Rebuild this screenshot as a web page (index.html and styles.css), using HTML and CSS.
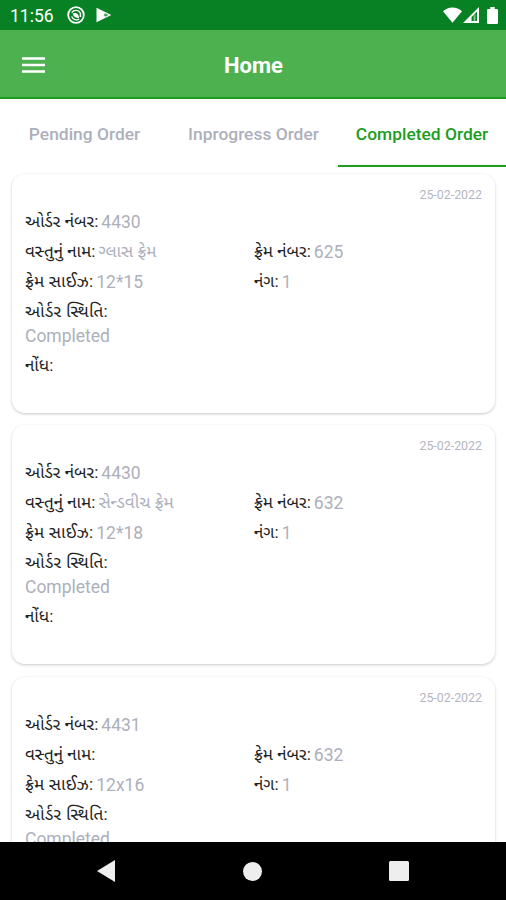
FILE: index.html
```html
<!DOCTYPE html>
<html lang="gu">
	<head>
		<meta charset="utf-8">
		<title>Home</title>
		<link rel="stylesheet" href="styles.css">
	</head>
	<body>
		<div class="status-bar">
			<span class="clock">11:56</span>
			<svg class="status-app" width="18" height="18" viewBox="0 0 18 18">
				<circle cx="9" cy="9" r="7.8" fill="none" stroke="#fff" stroke-width="1.8"/>
				<path d="M4.6 6.6C7 3.6 11.5 3.6 13.4 7V11M4.6 10.5C6 13.6 9.6 14.7 12.2 13.2" fill="none" stroke="#fff" stroke-width="1.4"/>
				<path d="M5.6 7.6C8.6 6 12 7.7 12.2 12.2C8.8 12.2 6.3 10.8 5.6 7.6Z" fill="#fff"/>
			</svg>
			<svg class="status-play" width="16" height="16" viewBox="0 0 16 16">
				<path d="M.5 .8L15.3 8L.5 15.2Z" fill="#fff"/>
				<path d="M9.3 6.3L7.5 8L9.3 9.8L12.6 8Z" fill="#4ba55e"/>
			</svg>
			<svg class="status-wifi" width="19" height="16" viewBox="0 0 19 16">
				<path d="M0 4.2C5-.9 14-.9 19 4.2L9.5 15.7Z" fill="#fff"/>
			</svg>
			<svg class="status-signal" width="16" height="16" viewBox="0 0 16 16">
				<path d="M0 16L16 0V16Z" fill="#fff"/>
				<path d="M8.5 10L14 4.5V14H8.5Z" fill="#078123"/>
				<path d="M10.5 14V8.5L12.5 6.5V14Z" fill="#80be8c"/>
			</svg>
			<svg class="status-battery" width="11" height="17" viewBox="0 0 11 17">
				<path d="M3.3 0H7.7V2H9.7Q11 2 11 3.3V15.7Q11 17 9.7 17H1.3Q0 17 0 15.7V3.3Q0 2 1.3 2H3.3Z" fill="#fff"/>
			</svg>
		</div>

		<div class="toolbar">
			<svg class="menu-icon" width="23" height="16" viewBox="0 0 23 16">
				<path d="M0 1.5H23M0 8H23M0 14.5H23" stroke="#fff" stroke-width="2.7"/>
			</svg>
			<h1>Home</h1>
		</div>

		<div class="tabs">
			<div class="tab">Pending Order</div>
			<div class="tab">Inprogress Order</div>
			<div class="tab active">Completed Order</div>
		</div>

		<div class="orders">
			<div class="card">
				<div class="date">25-02-2022</div>
				<div class="row"><div class="field"><label>ઓર્ડર નંબર:</label><span>4430</span></div></div>
				<div class="row">
					<div class="field"><label>વસ્તુનું નામ:</label><span class="name">ગ્લાસ ફ્રેમ</span></div>
					<div class="field"><label>ફ્રેમ નંબર:</label><span>625</span></div>
				</div>
				<div class="row">
					<div class="field"><label class="size">ફ્રેમ સાઈઝ:</label><span>12*15</span></div>
					<div class="field"><label>નંગ:</label><span>1</span></div>
				</div>
				<div class="row status"><label>ઓર્ડર સ્થિતિ:</label></div>
				<div class="row status-value"><span>Completed</span></div>
				<div class="row"><label>નોંધ:</label></div>
			</div>

			<div class="card">
				<div class="date">25-02-2022</div>
				<div class="row"><div class="field"><label>ઓર્ડર નંબર:</label><span>4430</span></div></div>
				<div class="row">
					<div class="field"><label>વસ્તુનું નામ:</label><span class="name">સેન્ડવીચ ફ્રેમ</span></div>
					<div class="field"><label>ફ્રેમ નંબર:</label><span>632</span></div>
				</div>
				<div class="row">
					<div class="field"><label class="size">ફ્રેમ સાઈઝ:</label><span>12*18</span></div>
					<div class="field"><label>નંગ:</label><span>1</span></div>
				</div>
				<div class="row status"><label>ઓર્ડર સ્થિતિ:</label></div>
				<div class="row status-value"><span>Completed</span></div>
				<div class="row"><label>નોંધ:</label></div>
			</div>

			<div class="card">
				<div class="date">25-02-2022</div>
				<div class="row"><div class="field"><label>ઓર્ડર નંબર:</label><span>4431</span></div></div>
				<div class="row">
					<div class="field"><label>વસ્તુનું નામ:</label></div>
					<div class="field"><label>ફ્રેમ નંબર:</label><span>632</span></div>
				</div>
				<div class="row">
					<div class="field"><label class="size">ફ્રેમ સાઈઝ:</label><span>12x16</span></div>
					<div class="field"><label>નંગ:</label><span>1</span></div>
				</div>
				<div class="row status"><label>ઓર્ડર સ્થિતિ:</label></div>
				<div class="row status-value"><span>Completed</span></div>
			</div>
		</div>

		<div class="nav-bar">
			<svg width="18" height="22" viewBox="0 0 18 22"><path d="M0 11L18 0V22Z" fill="#eee"/></svg>
			<svg width="19" height="19" viewBox="0 0 19 19"><circle cx="9.5" cy="9.5" r="9.5" fill="#eee"/></svg>
			<svg width="20" height="20" viewBox="0 0 20 20"><rect width="20" height="20" rx="1.5" fill="#eee"/></svg>
		</div>
	</body>
</html>
```
FILE: styles.css
```css
* {
	box-sizing: border-box;
}

body {
	margin: 0;
	height: 900px;
	display: flex;
	flex-direction: column;
	overflow: hidden;
	background-color: #fff;
	font-family: Roboto, "Noto Sans Gujarati", "Noto Sans", sans-serif;
}

svg {
	display: block;
	flex: none;
}

.status-bar {
	flex: none;
	height: 30px;
	padding: 0 8px 0 10px;
	display: flex;
	align-items: center;
	background-color: #078123;
	color: #fff;
}
.clock {
	width: 57px;
	padding-top: 1px;
	font-size: 17.5px;
}
.status-play {
	margin-left: 11px;
}
.status-wifi {
	margin-left: auto;
}
.status-signal {
	margin-left: 1px;
}
.status-battery {
	margin-left: 8px;
}

.toolbar {
	flex: none;
	height: 69px;
	padding: 2px 22px 0;
	display: grid;
	grid-template-columns: 23px 1fr 23px;
	align-items: center;
	background-color: #4db150;
	border-bottom: 2px solid #1b9d1e;
	color: #fff;
}
h1 {
	margin: 2px 0 0 1px;
	text-align: center;
	font-size: 22px;
	line-height: 26px;
	font-weight: 700;
}

.tabs {
	flex: none;
	height: 68px;
	display: grid;
	grid-template-columns: 169px 1fr 168px;
}
.tab {
	height: 68px;
	padding-top: 3px;
	line-height: 64px;
	text-align: center;
	white-space: nowrap;
	font-size: 17.4px;
	font-weight: 500;
	color: #adb0bb;
	border-bottom: 2px solid transparent;
}
.tab.active {
	color: #1b9d1e;
	border-color: #1b9d1e;
}

.orders {
	flex: 1;
	min-height: 0;
	overflow: hidden;
	padding: 7px 11px 0 12px;
	display: flex;
	flex-direction: column;
	gap: 12.3px;
}
.card {
	flex: none;
	height: 239px;
	padding: 13px 13px 0;
	border-radius: 13px;
	background-color: #fff;
	box-shadow: 0 1px 3px rgba(0, 0, 0, 0.22);
}
.date {
	height: 20px;
	line-height: 16px;
	text-align: right;
	font-size: 12.4px;
	color: #b4b6c0;
}
.row {
	height: 30px;
	line-height: 30px;
	display: grid;
	grid-template-columns: 229px 1fr;
	font-size: 17.5px;
	white-space: nowrap;
}
.field {
	display: flex;
	gap: 3px;
}
label {
	color: #222;
	font-size: 17.1px;
	line-height: 29px;
}
.size {
	letter-spacing: 0.2px;
}
.row span {
	color: #adb0bb;
}
.row .name {
	font-size: 17.1px;
	line-height: 29px;
}
.status {
	height: 27px;
}
.status label {
	letter-spacing: 0.3px;
}
.status-value {
	height: 27px;
	line-height: 24px;
}

.nav-bar {
	flex: none;
	height: 58px;
	padding: 0 97px;
	display: flex;
	align-items: center;
	justify-content: space-between;
	background-color: #000;
}
```
